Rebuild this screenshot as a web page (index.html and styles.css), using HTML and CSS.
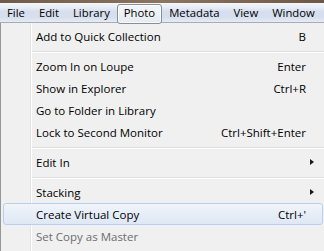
FILE: index.html
```html
<!DOCTYPE html>
<html>
<head>
<meta charset="utf-8">
<link rel="stylesheet" href="styles.css">
</head>
<body>
<div class="topstrip"></div>
<div class="menubar">
  <span class="mb-item">File</span>
  <span class="mb-item">Edit</span>
  <span class="mb-item">Library</span>
  <span class="mb-item active">Photo</span>
  <span class="mb-item">Metadata</span>
  <span class="mb-item">View</span>
  <span class="mb-item">Window</span>
</div>
<div class="menu">
  <div class="item"><span class="label">Add to Quick Collection</span><span class="key">B</span></div>
  <div class="sep"></div>
  <div class="item"><span class="label">Zoom In on Loupe</span><span class="key">Enter</span></div>
  <div class="item"><span class="label">Show in Explorer</span><span class="key">Ctrl+R</span></div>
  <div class="item"><span class="label">Go to Folder in Library</span><span class="key"></span></div>
  <div class="item"><span class="label">Lock to Second Monitor</span><span class="key">Ctrl+Shift+Enter</span></div>
  <div class="sep"></div>
  <div class="item sub"><span class="label">Edit In</span><span class="key"></span></div>
  <div class="sep"></div>
  <div class="item sub"><span class="label">Stacking</span><span class="key"></span></div>
  <div class="item hover"><span class="label">Create Virtual Copy</span><span class="key">Ctrl+'</span></div>
  <div class="item disabled"><span class="label">Set Copy as Master</span><span class="key"></span></div>
</div>
</body>
</html>
```

FILE: styles.css
```css
html, body {
  margin: 0;
  padding: 0;
}
body {
  width: 324px;
  height: 251px;
  overflow: hidden;
  background: #f0f0f0;
  font-family: "Open Sans", "Noto Sans", sans-serif;
  font-size: 11.5px;
  color: #000;
}
.topstrip {
  height: 3px;
  background: linear-gradient(90deg, #6f5b49, #8c7561 50%, #6c5846);
}
.menubar {
  height: 19px;
  display: flex;
  align-items: center;
  padding-left: 0;
  font-size: 11.3px;
  background: linear-gradient(#f3f6fa 0, #e7ecf5 25%, #d6dfee 45%, #d7dfee 75%, #e6ebf4 100%);
  border-bottom: 1px solid #a7adb8;
}
.mb-item {
  padding: 0 6px;
  height: 17px;
  line-height: 17px;
  border: 1px solid transparent;
  border-radius: 3px;
  white-space: nowrap;
}
.mb-item.active {
  border-color: #8a8e96;
  background: linear-gradient(#f4f6f9, #e6ebf2);
  box-shadow: inset 0 0 0 1px rgba(255,255,255,0.7);
  margin-top: 3px;
  height: 18px;
  line-height: 16px;
}
.menu {
  border-left: 1px solid #979797;
  padding: 2px 0 4px 2px;
  width: 330px;
  background: linear-gradient(90deg, transparent 29px, #e2e3e3 29px, #e2e3e3 30px, #ffffff 30px, #ffffff 31px, transparent 31px);
}
.item {
  height: 22px;
  width: 320px;
  box-sizing: border-box;
  display: flex;
  align-items: center;
  padding-left: 32px;
  padding-right: 16px;
  border: 1px solid transparent;
  border-radius: 3px;
  position: relative;
  white-space: nowrap;
}
.item .label {
  flex: 1;
}
.item .key {
  text-align: right;
}
.item.sub::after {
  content: "";
  position: absolute;
  right: 8px;
  top: 7px;
  border-left: 4px solid #1a1a1a;
  border-top: 3.5px solid transparent;
  border-bottom: 3.5px solid transparent;
}
.item.hover {
  border-color: #b8d0ef;
  background: linear-gradient(#f1f5fb, #e6edf7 55%, #dfe8f5);
}
.item.disabled {
  color: #6d6d6d;
}
.sep {
  height: 8px;
  margin-left: 29px;
  background: linear-gradient(transparent 4px, #e0e0e0 4px, #e0e0e0 5px, #ffffff 5px, #ffffff 6px, transparent 6px);
}
```
